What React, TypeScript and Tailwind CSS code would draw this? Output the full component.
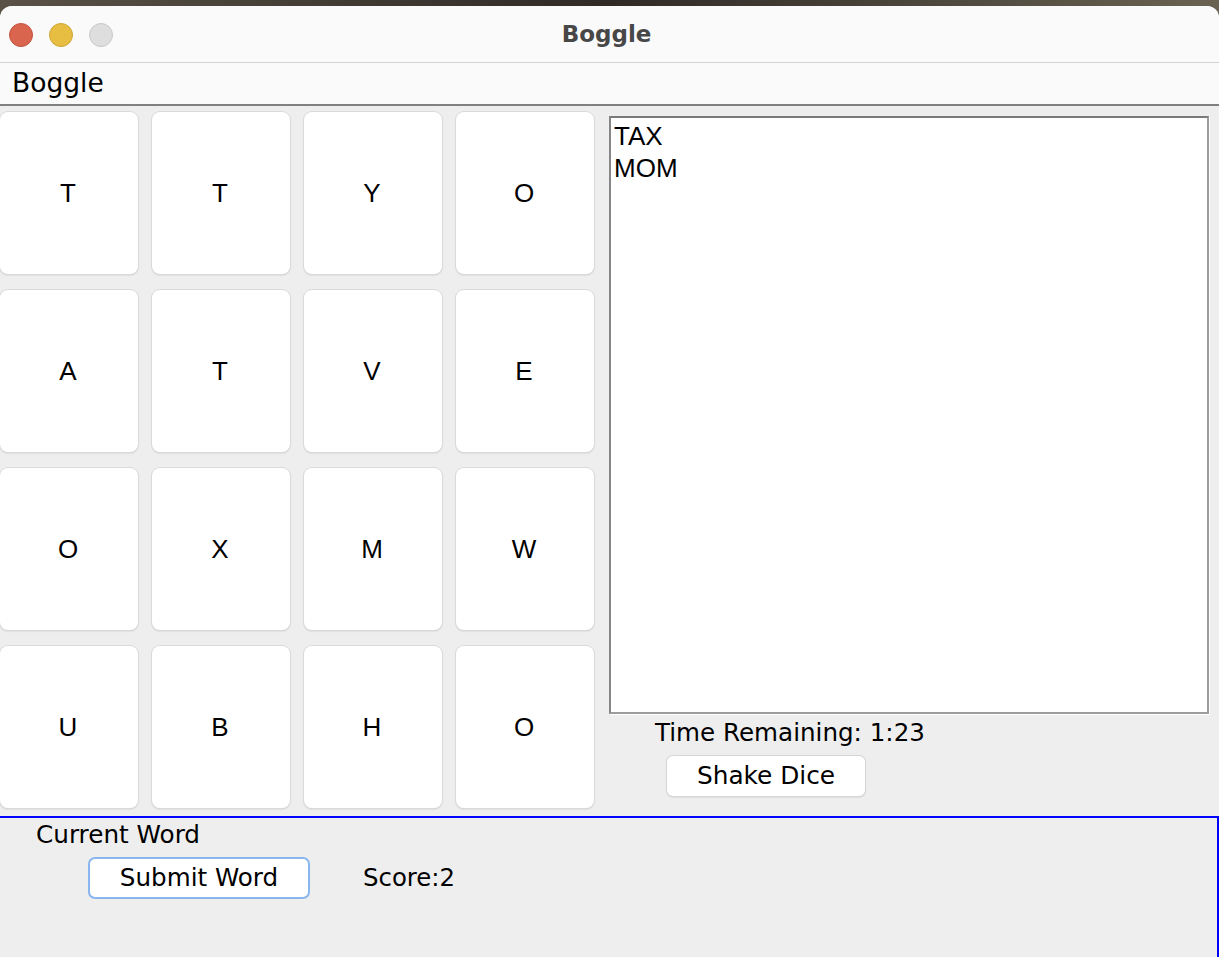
import React from 'react';

const BOARD: string[][] = [
  ['T', 'T', 'Y', 'O'],
  ['A', 'T', 'V', 'E'],
  ['O', 'X', 'M', 'W'],
  ['U', 'B', 'H', 'O'],
];

const FOUND_WORDS = ['TAX', 'MOM'];

const ui = { fontFamily: '"DejaVu Sans", "Lucida Grande", sans-serif' };
const arial = { fontFamily: '"Liberation Sans", Arial, sans-serif' };

const Tile: React.FC<{ letter: string }> = ({ letter }) => (
  <button
    className="h-[162px] bg-white rounded-[8px] flex items-center justify-center pr-[2px] text-[26px] text-black shadow-[0_0_0_1px_#dadada,0_1px_2px_rgba(0,0,0,0.2)]"
    style={arial}
  >
    {letter}
  </button>
);

const App: React.FC = () => {
  return (
    <div className="w-[1219px] h-[957px] overflow-hidden pt-[6px] bg-gradient-to-r from-[#5a5246] via-[#2f2a26] to-[#6a6352]">
      <div className="h-full bg-[#eeeeee] rounded-t-[12px] overflow-hidden flex flex-col text-black" style={ui}>
        {/* Title bar */}
        <div className="h-[57px] shrink-0 bg-[#fafafa] border-b border-[#d3d3d3] grid grid-cols-[1fr_auto_1fr] items-center">
          <div className="flex items-center gap-[16px] pl-[9px] pt-[1px]">
            <span className="w-[24px] h-[24px] rounded-full bg-[#d9654f] border border-[#c2533f]" />
            <span className="w-[24px] h-[24px] rounded-full bg-[#e7be42] border border-[#cfa534]" />
            <span className="w-[24px] h-[24px] rounded-full bg-[#dedede] border border-[#c8c8c8]" />
          </div>
          <div className="text-[23px] font-bold text-[#474747] -ml-[6px]">Boggle</div>
          <div />
        </div>

        {/* Menu bar */}
        <div className="h-[43px] shrink-0 bg-[#fafafa] border-b-2 border-[#808080] flex items-center px-[12px]">
          <span className="text-[26.5px] leading-none">Boggle</span>
        </div>

        {/* Main content */}
        <div className="flex flex-1 min-h-0">
          <div className="w-[594px] shrink-0 pt-[6px] grid grid-cols-4 gap-x-[14px] gap-y-[16px] content-start">
            {BOARD.flat().map((letter, i) => (
              <Tile key={i} letter={letter} />
            ))}
          </div>

          <div className="ml-[15px] w-[600px] pt-[10px] flex flex-col">
            <div
              className="h-[598px] bg-white border-2 border-t-[#7a7a7a] border-l-[#868686] border-r-[#9c9c9c] border-b-[#9c9c9c] shadow-[1px_1px_0_#ffffff] px-[3px] pt-[2px] text-[26px] leading-[32px]"
              style={arial}
            >
              {FOUND_WORDS.map((w) => (
                <div key={w}>{w}</div>
              ))}
            </div>
            <div className="pl-[46px] mt-[5px] text-[24.6px] leading-[28px]">Time Remaining: 1:23</div>
            <div className="pl-[58px] mt-[9px]">
              <button className="w-[198px] h-[40px] bg-white rounded-[6px] text-[24.8px] shadow-[0_0_0_1px_#d6d6d6,0_1px_2px_rgba(0,0,0,0.2)]">
                Shake Dice
              </button>
            </div>
          </div>
        </div>

        {/* Bottom panel */}
        <div className="h-[141px] shrink-0 mt-[8px] border-t-2 border-r-2 border-[#0000ff] flex flex-col">
          <div className="pl-[36px] pt-[3px] text-[24.7px] leading-[28px]">Current Word</div>
          <div className="flex items-center mt-[8px]">
            <button className="ml-[88px] w-[222px] h-[42px] bg-white rounded-[7px] border-2 border-[#8ab6ef] text-[24.6px]">
              Submit Word
            </button>
            <span className="ml-[53px] text-[24.4px]">Score:2</span>
          </div>
        </div>
      </div>
    </div>
  );
};

export default App;
